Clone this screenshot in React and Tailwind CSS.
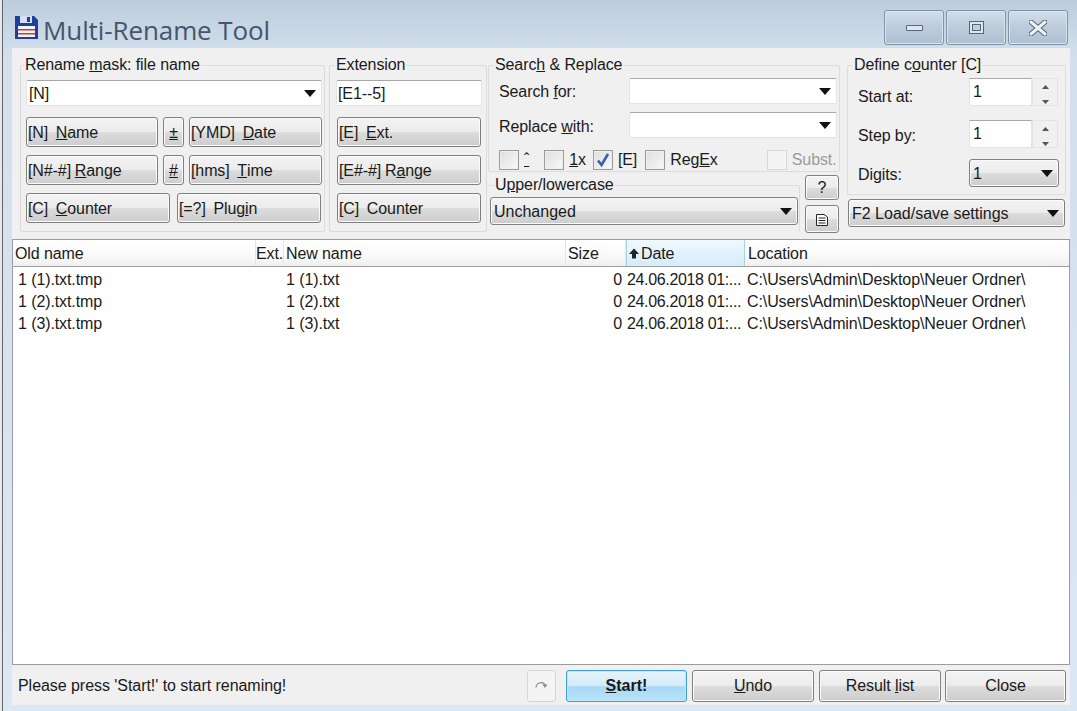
import React from "react";

const btnBg =
  "bg-[linear-gradient(to_bottom,#f3f3f3_0%,#ececec_50%,#dcdcdc_52%,#cdcdcd_100%)] border border-[#7f7f7f] rounded-[3px] shadow-[inset_0_0_0_1px_#fbfbfb]";

function Caret({ className = "" }) {
  return (
    <svg width="12" height="7" viewBox="0 0 12 7" className={className}>
      <path d="M0 0H12L6 7Z" fill="#111" />
    </svg>
  );
}

function Btn({ w, h = "h-[30px]", children, className = "" }) {
  return (
    <div className={`${w} ${h} ${btnBg} ${className} flex items-center pl-[1px] pt-[1px] whitespace-pre [word-spacing:-0.5px] shrink-0`}>
      {children}
    </div>
  );
}

function Field({ value, w, h = "h-[26px]", caret = true, className = "" }) {
  return (
    <div className={`${w} ${h} ${className} bg-white border border-[#e3e3e3] border-t-[#a8a8a8] flex items-center justify-between pl-[1px] pt-[1px] pr-[5px] shrink-0 rounded-[2px]`}>
      <span>{value}</span>
      {caret && <Caret />}
    </div>
  );
}

function ComboBtn({ value, w, h, className = "" }) {
  return (
    <div className={`${w} ${h} ${btnBg} ${className} flex items-center justify-between pl-[3px] pr-[5px] shrink-0 tracking-normal`}>
      <span className="pt-[1px]">{value}</span>
      <Caret />
    </div>
  );
}

function Group({ title, className = "", legend = "ml-[5px]", children }) {
  return (
    <fieldset className={`border border-[#dcdcdc] rounded-[2px] shrink-0 ${className}`}>
      <legend className={`${legend} px-[1px] pt-[1px] h-[18px] leading-[16px] whitespace-pre`}>{title}</legend>
      {children}
    </fieldset>
  );
}

function Check({ checked, disabled, ml, children }) {
  return (
    <div className={`flex items-center gap-[5px] ${ml}`}>
      <div className={`w-[20px] h-[20px] border flex items-center justify-center ${disabled ? "border-[#d8d8d8] bg-[#f4f4f4]" : "border-[#9a9a9a] bg-[linear-gradient(135deg,#dedede,#f8f8f8)] shadow-[inset_0_0_0_1px_#efefef]"}`}>
        {checked && (
          <svg width="16" height="16" viewBox="0 0 16 16">
            <path d="M3 8.5L6.5 13L13 2" stroke="#3d5ea8" strokeWidth="2.6" fill="none" />
          </svg>
        )}
      </div>
      <span className={disabled ? "text-[#9b9b9b]" : ""}>{children}</span>
    </div>
  );
}

function Spinner() {
  return (
    <div className="flex h-[28px]">
      <div className="w-[63px] bg-white border border-[#e3e3e3] border-t-[#a8a8a8] pl-[3px] leading-[26px]">1</div>
      <div className="w-[26px] border border-[#e4e4e4] flex flex-col items-center justify-center gap-[11px] pt-[4px]">
        <svg width="7" height="4" viewBox="0 0 7 4"><path d="M0 4L3.5 0L7 4Z" fill="#555" /></svg>
        <svg width="7" height="4" viewBox="0 0 7 4"><path d="M0 0L3.5 4L7 0Z" fill="#555" /></svg>
      </div>
    </div>
  );
}

function WinBtn({ children }) {
  return (
    <div className="w-[60px] h-[35px] border border-[#7f93a8] rounded-[3px] bg-[linear-gradient(to_bottom,#d3deea,#bccbdc_50%,#afc0d3)] shadow-[inset_0_0_0_1px_#dbe5ef] flex items-center justify-center">
      {children}
    </div>
  );
}

const rows = ["1", "2", "3"];

function HeadCol({ w, className = "", children }) {
  return (
    <div className={`${w} ${className} h-full flex items-center pt-[1px] shrink-0 border-r border-[#e5e5e5] whitespace-pre`}>
      {children}
    </div>
  );
}

export default function App() {
  return (
    <div className="w-[1077px] h-[711px] overflow-hidden flex text-[16px] tracking-[-0.1px] text-[#1a1a1a] font-['Liberation_Sans',Arial,sans-serif] bg-[linear-gradient(to_bottom,#bdcddd_0%,#d3e0ec_8%,#dbe7f3_100%)]">
      <div className="w-[3px] shrink-0 border-r border-[#5f6770] bg-[#e8e8e8]" />
      <div className="flex-1 flex flex-col pl-[9px] pr-[7px]">
        {/* title bar */}
        <div className="h-[48px] flex shrink-0">
          <svg width="23" height="23" viewBox="0 0 23 23" className="mt-[16px] ml-[3px]">
            <path d="M0 0H19L23 4V23H0Z" fill="#1d3f9e" />
            <rect x="5" y="0" width="12" height="7" fill="#d9dff0" />
            <rect x="12" y="1" width="3" height="5" fill="#1d3f9e" />
            <rect x="3" y="10" width="17" height="11" fill="#f6f3f3" />
            <rect x="3" y="13" width="17" height="1.5" fill="#c8373f" />
            <rect x="3" y="17" width="17" height="1.5" fill="#c8373f" />
          </svg>
          <div className="ml-[5px] mt-[12px] h-[36px] text-[26px] leading-[36px] text-[#43566b] font-['Open_Sans',sans-serif] whitespace-pre">Multi-Rename Tool</div>
          <div className="ml-auto mt-[10px] flex gap-[2px] mr-[2px] h-[35px]">
            <WinBtn>
              <div className="w-[17px] h-[6px] rounded-[1px] border border-[#55677a] bg-[#dfe6ee]" />
            </WinBtn>
            <WinBtn>
              <div className="w-[15px] h-[13px] border border-[#55677a] bg-[#dfe6ee] flex items-center justify-center">
                <div className="w-[9px] h-[7px] border border-[#55677a] bg-[#c3d0de]" />
              </div>
            </WinBtn>
            <WinBtn>
              <svg width="18" height="16" viewBox="0 0 18 16">
                <path d="M2 2L16 14M16 2L2 14" stroke="#55677a" strokeWidth="5" strokeLinecap="round" />
                <path d="M2 2L16 14M16 2L2 14" stroke="#eef2f6" strokeWidth="3" strokeLinecap="round" />
              </svg>
            </WinBtn>
          </div>
        </div>

        {/* options */}
        <div className="h-[191px] bg-[#f0f0f0] shrink-0 flex pt-[8px] pl-[8px]">
          <Group title={<>Rename <u>m</u>ask: file name</>} legend="ml-[3px]" className="w-[305px] h-[176px]">
            <div className="pl-[5px] pt-[6px] flex flex-col">
              <Field value="[N]" w="w-[296px]" className="pl-[2px]" />
              <div className="flex mt-[11px] gap-[5px]">
                <Btn w="w-[132px]">[N]  <u>N</u>ame</Btn>
                <Btn w="w-[21px]" className="justify-center !pl-0"><u>±</u></Btn>
                <Btn w="w-[133px]">[YMD]  <u>D</u>ate</Btn>
              </div>
              <div className="flex mt-[8px] gap-[5px]">
                <Btn w="w-[132px]">[N#-#] <u>R</u>ange</Btn>
                <Btn w="w-[21px]" className="justify-center !pl-0"><u>#</u></Btn>
                <Btn w="w-[133px]">[hms]  <u>T</u>ime</Btn>
              </div>
              <div className="flex mt-[8px] gap-[7px]">
                <Btn w="w-[144px]">[C]  <u>C</u>ounter</Btn>
                <Btn w="w-[144px]">[=?]  Plug<u>i</u>n</Btn>
              </div>
            </div>
          </Group>

          <Group title="Extension" className="w-[158px] h-[176px] ml-[4px]">
            <div className="pl-[6px] pt-[6px] flex flex-col">
              <Field value="[E1--5]" w="w-[146px]" caret={false} />
              <Btn w="w-[144px]" className="mt-[11px] ml-[1px]">[E]  <u>E</u>xt.</Btn>
              <Btn w="w-[144px]" className="mt-[8px] ml-[1px]">[E#-#] R<u>a</u>nge</Btn>
              <Btn w="w-[144px]" className="mt-[8px] ml-[1px]">[C]  Counter</Btn>
            </div>
          </Group>

          <div className="w-[352px] ml-[1px] shrink-0 flex flex-col">
            <Group title={<>Searc<u>h</u> &amp; Replace</>} className="w-[352px] h-[116px]">
              <div className="pt-[4px] flex flex-col">
                <div className="flex items-center pl-[10px]">
                  <span className="w-[130px] pt-[2px] leading-[18px]">Search <u>f</u>or:</span>
                  <Field value="" w="w-[208px]" />
                </div>
                <div className="flex items-center pl-[10px] mt-[8px]">
                  <span className="w-[130px] pt-[4px] leading-[18px]">Replace <u>w</u>ith:</span>
                  <Field value="" w="w-[208px]" />
                </div>
                <div className="flex items-center pl-[10px] mt-[10px]">
                  <Check><u>ˆ</u></Check>
                  <Check ml="ml-[15px]"><u>1</u>x</Check>
                  <Check ml="ml-[7px]" checked>[E]</Check>
                  <Check ml="ml-[8px]">Reg<u>E</u>x</Check>
                  <Check ml="ml-[49px]" disabled>Subst.</Check>
                </div>
              </div>
            </Group>
            <div className="flex mt-[4px]">
              <Group title={<>U<u>p</u>per/lowercase</>} legend="ml-[6px]" className="w-[312px] h-[56px] border-b-0 border-l-0">
                <ComboBtn value="Unchanged" w="w-[308px]" h="h-[28px]" className="mt-[3px] ml-[2px]" />
              </Group>
              <div className="ml-[5px] flex flex-col gap-[5px] -mt-[1px]">
                <div className={`${btnBg} w-[34px] h-[25px] flex items-center justify-center`}>?</div>
                <div className={`${btnBg} w-[34px] h-[28px] flex items-center justify-center`}>
                  <svg width="12" height="13" viewBox="0 0 12 13">
                    <path d="M0.5 1.5H8L11.5 4V12.5H0.5Z" fill="#fff" stroke="#222" />
                    <path d="M2.5 5H9.5M2.5 7.5H9.5M2.5 10H9.5" stroke="#222" />
                  </svg>
                </div>
              </div>
            </div>
          </div>

          <div className="w-[219px] ml-[7px] shrink-0 flex flex-col">
            <Group title={<>Define c<u>o</u>unter [C]</>} className="w-[219px] h-[139px]">
              <div className="pt-[4px] pl-[10px] flex flex-col">
                <div className="flex">
                  <span className="w-[111px] pt-[7px]">Start at:</span>
                  <Spinner />
                </div>
                <div className="flex mt-[11px]">
                  <span className="w-[111px] pt-[4px]">Step by:</span>
                  <Spinner />
                </div>
                <div className="flex items-center mt-[11px]">
                  <span className="w-[111px] pt-[4px]">Digits:</span>
                  <ComboBtn value="1" w="w-[90px]" h="h-[28px]" />
                </div>
              </div>
            </Group>
            <ComboBtn value="F2 Load/save settings" w="w-[217px]" h="h-[28px]" className="mt-[4px] ml-[1px]" />
          </div>
        </div>

        {/* file list */}
        <div className="flex-1 min-h-0 bg-white border border-[#9c9c9c] flex flex-col">
          <div className="h-[27px] shrink-0 border-b border-[#a0a0a0] flex bg-[linear-gradient(to_bottom,#ffffff,#fbfbfb_50%,#f0f0f0)]">
            <HeadCol w="w-[243px]" className="pl-[2px]">Old name</HeadCol>
            <HeadCol w="w-[28px]">Ext.</HeadCol>
            <HeadCol w="w-[282px]" className="pl-[2px]">New name</HeadCol>
            <HeadCol w="w-[60px]" className="pl-[2px]">Size</HeadCol>
            <div className="w-[119px] h-full shrink-0 flex items-center pt-[1px] border-x border-[#a9d3ea] bg-[linear-gradient(to_bottom,#f0f9fe,#d4ecfb)]">
              <svg width="12" height="11" viewBox="0 0 12 11" className="ml-[1px] mr-[1px]">
                <path d="M6 0.5L11 6H8V10.5H4V6H1Z" fill="#222" />
              </svg>
              Date
            </div>
            <div className="pl-[3px] pt-[1px] flex items-center">Location</div>
          </div>
          <div className="flex-1 pt-[2px]">
            {rows.map((n) => (
              <div key={n} className="h-[22px] flex items-center whitespace-pre">
                <span className="w-[273px] pl-[5px] shrink-0">1 ({n}).txt.tmp</span>
                <span className="w-[320px] shrink-0">1 ({n}).txt</span>
                <span className="w-[16px] shrink-0 text-right">0</span>
                <span className="w-[125px] pl-[5px] shrink-0 tracking-[-0.35px]">24.06.2018 01:...</span>
                <span>C:\Users\Admin\Desktop\Neuer Ordner\</span>
              </div>
            ))}
          </div>
        </div>

        {/* status bar */}
        <div className="h-[40px] shrink-0 bg-[#f0f0f0] flex items-center pl-[6px] mb-[6px]">
          <span className="pt-[1px] tracking-[-0.05px]">Please press 'Start!' to start renaming!</span>
          <div className="ml-auto mr-[4px] flex items-center pt-[1px]">
            <div className="w-[29px] h-[32px] border border-[#d5d5d5] rounded-[3px] bg-[#f4f4f4] flex items-center justify-center">
              <svg width="13" height="9" viewBox="0 0 13 9">
                <path d="M1 6.5C1.5 1 8.5 0 10 4.5" stroke="#8a8a8a" fill="none" strokeWidth="1.2" />
                <path d="M7.5 3.5H12.5L10 7Z" fill="#8a8a8a" />
              </svg>
            </div>
            <div className="ml-[10px] w-[121px] h-[32px] rounded-[3px] border border-[#3c9fd6] bg-[linear-gradient(to_bottom,#e6f4fc,#d3ebfa_50%,#a9d9f6_52%,#b9e2f9)] shadow-[inset_0_0_0_1px_#c4e6f8] flex items-center justify-center font-bold tracking-normal"><span><u>S</u>tart!</span></div>
            <div className={`ml-[5px] w-[122px] h-[32px] ${btnBg} flex items-center justify-center`}><span><u>U</u>ndo</span></div>
            <div className={`ml-[5px] w-[122px] h-[32px] ${btnBg} flex items-center justify-center`}><span>Result <u>l</u>ist</span></div>
            <div className={`ml-[4px] w-[121px] h-[32px] ${btnBg} flex items-center justify-center`}>Close</div>
          </div>
        </div>
      </div>
    </div>
  );
}
